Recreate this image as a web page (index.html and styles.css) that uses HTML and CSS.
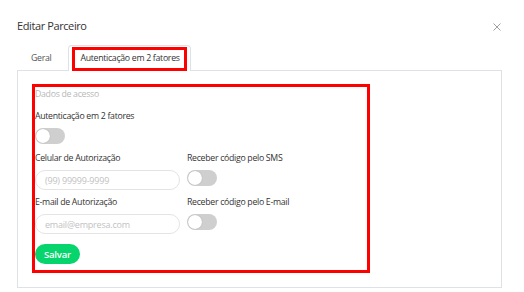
FILE: index.html
```html
<!DOCTYPE html>
<html lang="pt-BR">
<head>
    <meta charset="UTF-8">
    <meta name="viewport" content="width=device-width, initial-scale=1.0">
    <title>Editar Parceiro</title>
    <link rel="stylesheet" href="styles.css">
</head>
<body>
    <div class="modal">
        <div class="modal-header">
            <h2 class="modal-title">Editar Parceiro</h2>
            <button class="modal-close" type="button" aria-label="Fechar">
                <svg width="8" height="8" viewBox="0 0 8 8"><path d="M0.5 0.5L7.5 7.5M7.5 0.5L0.5 7.5" stroke="#a0a0a0" stroke-width="1" fill="none"/></svg>
            </button>
        </div>
        <ul class="tabs">
            <li class="tab">Geral</li>
            <li class="tab active"><span class="tab-mark">Autenticação em 2 fatores</span></li>
        </ul>
        <div class="tab-panel">
            <form class="auth-form" onsubmit="event.preventDefault()">
                <p class="section-title">Dados de acesso</p>
                <div class="group">
                    <label class="field-label">Autenticação em 2 fatores</label>
                    <span class="toggle"></span>
                </div>
                <div class="grid">
                    <div class="group">
                        <label class="field-label" for="celular">Celular de Autorização</label>
                        <input class="field" type="text" id="celular" placeholder="(99) 99999-9999">
                    </div>
                    <div class="group">
                        <label class="field-label">Receber código pelo SMS</label>
                        <span class="toggle"></span>
                    </div>
                    <div class="group">
                        <label class="field-label" for="email">E-mail de Autorização</label>
                        <input class="field" type="text" id="email" placeholder="email@empresa.com">
                    </div>
                    <div class="group">
                        <label class="field-label">Receber código pelo E-mail</label>
                        <span class="toggle"></span>
                    </div>
                </div>
                <button class="btn-save" type="submit">Salvar</button>
            </form>
        </div>
    </div>
</body>
</html>
```

FILE: styles.css
```css
body{margin:0;padding:0;background:#fff;color:#333;font-family:"Open Sans",Arial,sans-serif;}
.modal{width:485px;padding:18px 22px 0 17px;}
.modal-header{display:flex;justify-content:space-between;align-items:center;height:16px;}
.modal-title{margin:0;font-size:11px;font-weight:400;line-height:16px;letter-spacing:-0.4px;color:#333;}
.modal-close{border:none;background:none;padding:0;margin:2px 1px 0 0;width:8px;height:8px;line-height:0;cursor:pointer;}
.tabs{display:flex;list-style:none;margin:11px 0 0;padding:0;height:25px;border-bottom:1px solid #dee2e6;}
.tab{box-sizing:border-box;height:26px;margin-bottom:-1px;padding:0 16px 0 13px;border:1px solid transparent;border-bottom:none;border-radius:4px 4px 0 0;font-size:8.75px;line-height:24px;letter-spacing:-0.3px;color:#555;}
.tab.active{padding:1px 3px 0;border-color:#dee2e6;background:#fff;color:#333;}
.tab-mark{box-sizing:border-box;display:block;height:24px;padding:0 4px 0 5px;border:3px solid #f00;line-height:17px;}
.tab-panel{border:1px solid #dee2e6;border-top:none;padding:13px 0 14px 14px;}
.auth-form{box-sizing:border-box;width:338px;border:3px solid #f00;padding:0 0 6px;}
.section-title{margin:0 0 7px;font-size:8.75px;line-height:15px;letter-spacing:-0.3px;color:#b8b8b8;}
.group{display:flex;flex-direction:column;align-items:flex-start;margin-bottom:7px;}
.grid{display:grid;grid-template-columns:145px 1fr;column-gap:7px;}
.grid .group{margin-bottom:5px;}
.field-label{font-size:8.75px;line-height:15px;letter-spacing:-0.3px;color:#333;margin-bottom:4px;}
.toggle{position:relative;display:block;width:30px;height:16px;border-radius:8px;background:#cfcfcf;}
.toggle::after{content:"";position:absolute;left:1px;top:1px;width:14px;height:14px;border-radius:50%;background:#fff;box-shadow:0 0 1px rgba(0,0,0,0.3);}
.field{box-sizing:border-box;width:145px;height:20px;padding:0 9px;border:1px solid #e4e4e4;border-radius:10px;font-family:inherit;font-size:9px;letter-spacing:-0.2px;color:#333;outline:none;}
.field::placeholder{color:#c2c2c2;}
.btn-save{display:block;margin-top:5px;height:20px;padding:0 9px;border:none;border-radius:10px;background:#06d56d;color:#fff;font-family:inherit;font-size:9.5px;font-weight:600;letter-spacing:-0.2px;cursor:pointer;}
```
